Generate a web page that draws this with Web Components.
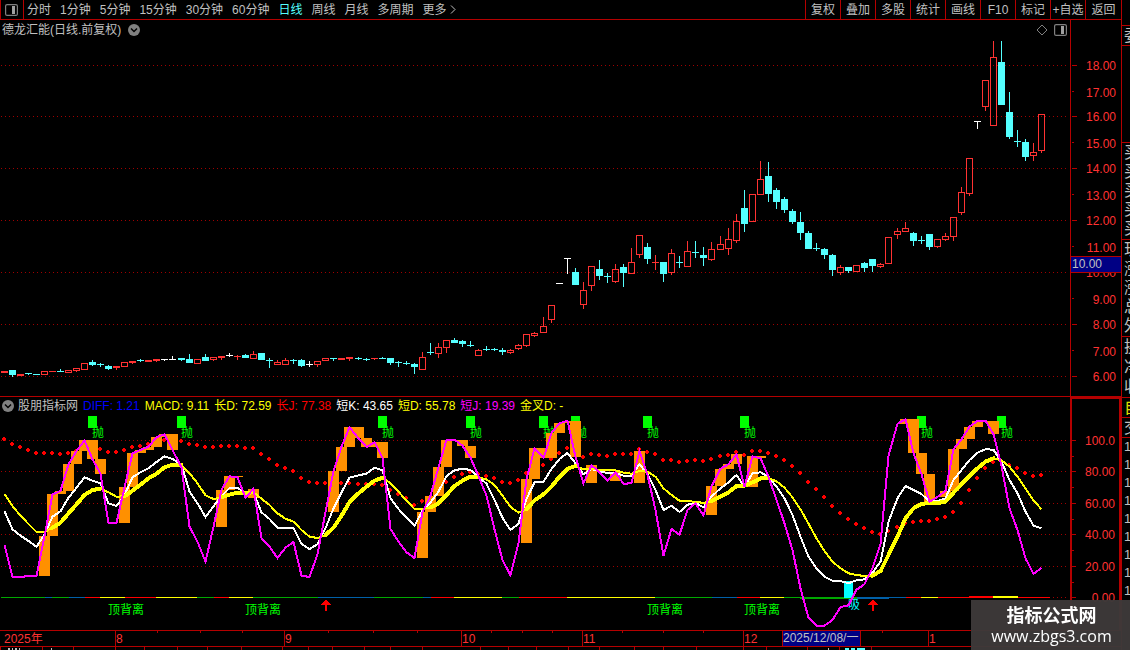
<!DOCTYPE html>
<html lang="zh-CN">
<head>
<meta charset="UTF-8">
<meta name="viewport" content="width=device-width, initial-scale=1">
<title>德龙汇能 日线</title>
<style>
  :root {
    --frame: #b40000;
    --label: #ff3232;
    --text: #c0c0c0;
    --up: #ff3232;
    --down: #54ffff;
  }
  body {
    margin: 0;
    background: #000;
    color: var(--text);
    font: 12px/16px "Liberation Sans", "Noto Sans CJK SC", sans-serif;
    overflow: hidden;
  }
</style>
</head>
<body>
<stock-app>
  <period-bar>
    <tool-button>分时</tool-button>
    <tool-button>1分钟</tool-button>
    <tool-button>5分钟</tool-button>
    <tool-button>15分钟</tool-button>
    <tool-button>30分钟</tool-button>
    <tool-button>60分钟</tool-button>
    <tool-button active>日线</tool-button>
    <tool-button>周线</tool-button>
    <tool-button>月线</tool-button>
    <tool-button>多周期</tool-button>
    <tool-button more>更多</tool-button>
    <tool-button slot="tools" boxed>复权</tool-button>
    <tool-button slot="tools" boxed>叠加</tool-button>
    <tool-button slot="tools" boxed>多股</tool-button>
    <tool-button slot="tools" boxed>统计</tool-button>
    <tool-button slot="tools" boxed>画线</tool-button>
    <tool-button slot="tools" boxed>F10</tool-button>
    <tool-button slot="tools" boxed>标记</tool-button>
    <tool-button slot="tools" boxed>+自选</tool-button>
    <tool-button slot="tools" boxed>返回</tool-button>
  </period-bar>
  <price-chart>德龙汇能(日线.前复权)</price-chart>
  <kdj-chart>
    <legend-item slot="legend" style="color:#0000ff">DIFF: 1.21</legend-item>
    <legend-item slot="legend" style="color:#ffff00">MACD: 9.11</legend-item>
    <legend-item slot="legend" style="color:#ffff00">长D: 72.59</legend-item>
    <legend-item slot="legend" style="color:#ff0000">长J: 77.38</legend-item>
    <legend-item slot="legend" style="color:#ffffff">短K: 43.65</legend-item>
    <legend-item slot="legend" style="color:#ffff00">短D: 55.78</legend-item>
    <legend-item slot="legend" style="color:#ff00ff">短J: 19.39</legend-item>
    <legend-item slot="legend" style="color:#ffff00">金叉D: -</legend-item>
    股朋指标网
  </kdj-chart>
  <time-axis></time-axis>
  <quote-rail slot="rail"></quote-rail>
</stock-app>
<site-mark>
  <span slot="name">指标公式网</span>
  www.zbgs3.com
</site-mark>

<script>
// Column of each trading day: 8px pitch with a spare pixel now and then
const dayX = i => 4 + 8 * i + Math.floor((i + 0.5) / 22.25);

const chevron = `
  <svg class="chevron" width="12" height="12" viewBox="0 0 12 12">
    <circle cx="6" cy="6" r="6" fill="#808080"/>
    <path d="M3 4.5 L6 7.5 L9 4.5" fill="none" stroke="#000" stroke-width="1.5"/>
  </svg>`;

const panelIcon = `
  <svg width="13" height="12" viewBox="0 0 13 12">
    <rect x="0.6" y="0.6" width="11.8" height="10.8" rx="1.5" fill="none" stroke="#808080" stroke-width="1.2"/>
    <rect x="7" y="2" width="3" height="8" fill="#a0a0a0"/>
  </svg>`;

class StockApp extends HTMLElement {
  connectedCallback() {
    this.attachShadow({ mode: 'open' });
    this.shadowRoot.innerHTML = `
      <style>
        :host {
          display: grid;
          grid-template-columns: minmax(0, 1fr) 9px;
          min-height: 100vh;
        }
        main {
          display: flex;
          flex-direction: column;
          min-width: 0;
        }
      </style>
      <main><slot></slot></main>
      <slot name="rail"></slot>
    `;
  }
}

class ToolButton extends HTMLElement {
  connectedCallback() {
    const more = this.hasAttribute('more')
      ? '<svg width="6" height="9" viewBox="0 0 6 9"><path d="M1 0.5 L5 4.5 L1 8.5" fill="none" stroke="currentColor"/></svg>'
      : '';
    this.attachShadow({ mode: 'open' });
    this.shadowRoot.innerHTML = `
      <style>
        :host { display: flex; }
        :host([boxed]) {
          width: 34px;
          border-left: 1px solid var(--frame);
        }
        :host([boxed]:last-of-type) { width: 35px; }
        button {
          flex: 1;
          display: flex;
          align-items: center;
          justify-content: center;
          gap: 3px;
          padding: 0;
          border: 0;
          background: none;
          color: var(--text);
          font: inherit;
          white-space: nowrap;
          cursor: pointer;
        }
        :host([active]) button { color: var(--down); }
        button:hover { color: #fff; }
      </style>
      <button type="button"><slot></slot>${more}</button>
    `;
  }
}

class PeriodBar extends HTMLElement {
  connectedCallback() {
    this.attachShadow({ mode: 'open' });
    this.shadowRoot.innerHTML = `
      <style>
        :host {
          display: flex;
          justify-content: space-between;
          height: 19px;
          border-bottom: 1px solid var(--frame);
        }
        .periods { display: flex; gap: 9px; }
        .layout {
          display: flex;
          align-items: center;
          justify-content: center;
          width: 24px;
          margin-right: -6px;
          padding: 0 2px 0 0;
          border: 1px solid var(--frame);
          border-width: 0 1px;
          box-sizing: border-box;
          background: none;
        }
        .tools { display: flex; }
      </style>
      <div class="periods">
        <button class="layout" type="button" aria-label="布局">${panelIcon}</button>
        <slot></slot>
      </div>
      <div class="tools"><slot name="tools"></slot></div>
    `;
  }
}

const paneStyle = `
  :host {
    display: grid;
    grid-template-columns: minmax(0, 1fr) 51px;
    --grid: #a00000;
  }
  .pane { min-width: 0; }
  .head {
    display: flex;
    align-items: center;
    white-space: nowrap;
  }
  svg { display: block; shape-rendering: crispEdges; }
  .chevron, .icons svg { shape-rendering: auto; flex: none; }
  .grid { stroke: var(--grid); stroke-dasharray: 1 3; }
  .tick { stroke: var(--frame); }
  .axis text { fill: var(--label); text-anchor: end; }
`;

// kind, high, body top, body bottom, low (r rising, c falling, w unchanged)
const candles = `
r371,371,373,373 c370,370,375,377 r374,374,376,376 c373,373,374,375 c374,374,375,375
r371,371,375,375 r371,371,372,372 c369,371,372,372 r370,370,373,373 r368,368,371,372
r363,363,370,370 c360,362,365,366 c363,364,365,367 c365,366,369,370 r366,366,368,370
r362,362,367,367 r361,361,363,364 c359,360,361,362 r360,360,362,362 r359,359,361,362
w359,359,360,361 w356,359,360,360 c358,358,360,361 c354,359,363,363 r359,359,364,364
c354,357,361,361 r357,357,360,361 r356,356,358,360 w353,355,356,357 r355,356,357,360
c354,355,358,358 r351,354,359,359 c353,353,360,360 c358,360,361,368 r360,362,365,365
r358,360,365,365 c359,360,361,364 c359,360,366,367 w361,364,365,367 r361,361,365,367
r358,358,361,361 c358,358,359,361 r358,358,360,360 r357,357,359,361 c357,358,359,360
c358,359,360,361 r358,358,359,360 c357,358,359,359 c358,358,363,365 c361,362,363,367
c361,363,364,365 c363,364,367,374 r352,357,370,370 c343,352,353,355 r343,347,354,358
r340,340,348,353 c338,340,343,343 c340,341,344,347 c341,345,346,347 r349,350,356,356
c346,349,350,351 c348,349,350,351 c348,350,352,355 r349,350,353,354 r344,345,349,350
r334,334,346,347 r332,333,336,337 r317,326,333,333 r305,305,320,323 w283,283,284,284
w258,258,259,274 c268,272,285,285 r282,290,305,309 r266,266,286,291 c260,269,276,280
c273,276,277,283 r264,269,282,283 c264,267,273,287 r248,262,274,274 r235,235,255,258
c243,247,259,264 r255,262,263,270 c262,262,274,282 r249,253,273,275 c256,262,263,268
r241,251,267,267 c241,252,253,258 c247,255,258,266 r242,249,260,261 r236,244,250,250
r228,239,249,255 r214,221,241,243 c190,208,224,232 r194,194,222,222 r161,179,195,195
c162,176,194,202 c188,190,202,209 c197,199,210,213 c209,211,222,224 c212,222,233,240
c231,233,249,249 c243,248,249,251 c248,249,255,259 c254,255,270,276 r265,267,273,275
c267,267,271,273 r265,265,272,272 c262,263,268,272 c259,259,266,272 r263,264,267,268
r237,237,264,264 r228,231,235,239 r222,228,232,232 c232,233,241,246 c236,240,241,244
c234,234,247,250 r239,239,247,248 r233,236,240,241 r217,217,237,241 r187,192,213,215
r158,158,194,196 w121,121,122,129 r80,80,107,111 r41,57,126,126 c41,62,105,105
c92,112,137,139 c130,141,142,147 c139,142,157,161 r143,152,156,161 r114,114,151,153
`.trim().split(/\s+/).map(s => [s[0], ...s.slice(1).split(',').map(Number)]);

const priceTicks = [
  ['18.00', 65], ['17.00', 91], ['16.00', 116], ['15.00', 142], ['14.00', 168],
  ['13.00', 194], ['12.00', 220], ['11.00', 246], ['10.00', 272], ['9.00', 298],
  ['8.00', 324], ['7.00', 350], ['6.00', 376]
];

class PriceChart extends HTMLElement {
  drawCandle([kind, high, top, bottom, low], i) {
    const x = dayX(i);
    const color = { r: 'var(--up)', c: 'var(--down)', w: '#fff' }[kind];
    const wick = (a, b) => b > a ? `<rect x="${x}" y="${a}" width="1" height="${b - a}" fill="${color}"/>` : '';
    let body = `<rect x="${x - 3}" y="${top}" width="7" height="${bottom - top}" fill="${color}"/>`;
    if (kind === 'r' && bottom - top > 2) {
      body = `<rect x="${x - 2.5}" y="${top + 0.5}" width="6" height="${bottom - top - 1}" fill="none" stroke="${color}"/>`;
    }
    return wick(high, top) + body + wick(bottom, low);
  }

  connectedCallback() {
    const grid = priceTicks.filter((t, i) => i % 2 === 0)
      .map(([, y]) => `<line class="grid" x1="1" x2="99.7%" y1="${y + 0.5}" y2="${y + 0.5}"/>`).join('');
    const axis = priceTicks.map(([label, y], i) => `
      <line class="tick" x1="1" x2="${i % 2 ? 3 : 6}" y1="${y + 0.5}" y2="${y + 0.5}"/>
      <text x="45" y="${y + (i % 2 ? 6 : 5)}">${label}</text>`).join('');
    this.attachShadow({ mode: 'open' });
    this.shadowRoot.innerHTML = `
      <style>
        ${paneStyle}
        :host { border-bottom: 1px solid var(--frame); }
        .head { height: 20px; gap: 7px; padding: 0 3px 0 2px; }
        .icons { display: flex; align-items: center; gap: 6px; margin-left: auto; }
        .axis { border-left: 1px solid var(--frame); }
        .cursor rect { fill: #000084; stroke: var(--frame); }
        .axis .cursor text { fill: var(--text); text-anchor: start; }
      </style>
      <div class="pane">
        <div class="head">
          <span><slot></slot></span>${chevron}
          <div class="icons">
            <svg width="12" height="12" viewBox="0 0 12 12">
              <path d="M6 1 L11 6 L6 11 L1 6 Z" fill="none" stroke="#808080"/>
            </svg>
            ${panelIcon}
          </div>
        </div>
        <svg width="100%" height="356">
          <g transform="translate(0 -40)">
            ${grid}
            ${candles.map(this.drawCandle).join('')}
          </g>
        </svg>
      </div>
      <div class="axis">
        <svg width="50" height="376">
          <g transform="translate(0 -20)">
            ${axis}
            <g class="cursor">
              <rect x="-0.5" y="256.5" width="51" height="16"/>
              <text x="1" y="268">10.00</text>
            </g>
          </g>
        </svg>
      </div>
    `;
  }
}

class LegendItem extends HTMLElement {
  connectedCallback() {
    this.attachShadow({ mode: 'open' });
    this.shadowRoot.innerHTML = `
      <style>:host { display: block; }</style>
      <slot></slot>
    `;
  }
}

// Indicator levels, one per day, counted down in thirds of a pixel
const J = [
  451, 546, 546, 543, 543, 424, 298, 288, 208, 168, 136, 193, 236, 384, 384, 277, 175, 165, 155, 127,
  118, 165, 217, 395, 440, 500, 395, 284, 244, 247, 308, 281, 430, 455, 489, 458, 441, 542, 546, 478,
  351, 229, 155, 97, 130, 156, 142, 188, 402, 440, 472, 489, 352, 302, 217, 135, 134, 152, 188, 243,
  302, 403, 495, 541, 445, 253, 160, 189, 114, 85, 77, 186, 265, 211, 232, 257, 232, 267, 264, 168,
  240, 345, 482, 402, 419, 345, 325, 361, 274, 221, 208, 178, 276, 184, 190, 245, 315, 385, 465, 580,
  668, 692, 692, 675, 636, 631, 584, 568, 520, 448, 182, 86, 73, 174, 238, 320, 306, 287, 163, 133,
  95, 78, 77, 118, 213, 340, 405, 490, 537, 518
];
const K = [
  349, 403, 422, 438, 456, 418, 365, 349, 308, 278, 247, 257, 265, 325, 333, 300, 247, 232, 220, 201,
  184, 192, 209, 290, 325, 366, 334, 303, 279, 278, 295, 292, 352, 372, 398, 398, 399, 447, 462, 448,
  400, 340, 292, 248, 241, 236, 218, 226, 310, 342, 368, 392, 347, 322, 290, 243, 226, 221, 225, 245,
  266, 315, 368, 405, 386, 312, 262, 260, 222, 192, 174, 205, 238, 222, 228, 235, 234, 242, 243, 208,
  238, 285, 345, 332, 351, 329, 324, 337, 305, 280, 262, 240, 275, 235, 232, 245, 275, 310, 360, 425,
  485, 520, 545, 557, 558, 565, 556, 553, 533, 500, 380, 310, 273, 285, 297, 320, 318, 310, 255, 225,
  195, 173, 163, 164, 200, 255, 295, 350, 392, 400
];
const D = [
  297, 333, 362, 387, 411, 411, 398, 383, 355, 328, 300, 285, 281, 292, 305, 304, 287, 269, 250, 236,
  217, 209, 210, 235, 265, 301, 312, 307, 299, 293, 294, 292, 311, 330, 355, 371, 380, 405, 425, 429,
  420, 398, 362, 322, 295, 275, 257, 248, 265, 290, 317, 342, 342, 337, 325, 300, 273, 257, 245, 247,
  253, 270, 302, 336, 353, 343, 316, 298, 275, 245, 221, 213, 223, 222, 224, 226, 226, 233, 236, 228,
  230, 245, 280, 300, 317, 319, 320, 324, 318, 305, 292, 273, 272, 262, 250, 249, 259, 278, 307, 343,
  386, 430, 468, 500, 520, 535, 540, 543, 542, 528, 480, 425, 370, 340, 326, 325, 324, 320, 293, 268,
  243, 220, 200, 190, 196, 215, 245, 280, 316, 343
];
const longJ = [
  132, 147, 156, 165, 174, 174, 174, 177, 174, 168, 160, 155, 162, 171, 171, 165, 156, 153, 147, 141,
  135, 135, 139, 147, 150, 156, 156, 153, 153, 153, 159, 159, 177, 192, 210, 219, 228, 249, 261, 264,
  264, 264, 264, 264, 267, 267, 267, 270, 285, 297, 309, 330, 318, 305, 285, 261, 246, 237, 232, 237,
  243, 249, 261, 264, 255, 234, 220, 210, 192, 174, 159, 175, 186, 177, 180, 183, 177, 177, 177, 162,
  171, 177, 195, 195, 201, 198, 195, 198, 192, 183, 180, 171, 180, 168, 168, 174, 183, 195, 213, 234,
  261, 282, 306, 333, 354, 372, 387, 399, 411, 417, 408, 396, 385, 381, 378, 378, 372, 366, 351, 324,
  285, 249, 219, 201, 198, 210, 219, 234, 243, 240
];
const barDays = [
  5, 6, 7, 8, 9, 10, 11, 12, 15, 16, 17, 18, 19, 20, 21, 27, 28, 29, 31,
  41, 42, 43, 44, 45, 46, 47, 52, 53, 54, 55, 56, 57, 58, 65, 66, 67, 68, 69, 70, 71,
  73, 76, 79, 88, 89, 90, 91, 93, 94, 112, 113, 114, 115, 117, 118, 119, 120, 121, 122, 123
];
const sellDays = [11, 22, 47, 58, 67, 71, 80, 92, 114, 124];
const divergenceDays = [13, 30, 80, 92];
const arrowDays = [40, 108];

// Trend strip: start x, colour key (capital letter for a heavy run)
const trend = [
  [1, 'g'], [45, 'b'], [52, 'g'], [69, 'b'], [85, 'r'], [100, 'y'], [125, 'r'], [156, 'y'], [197, 'g'],
  [214, 'r'], [229, 'y'], [253, 'g'], [318, 'b'], [374, 'g'], [423, 'b'], [431, 'r'], [454, 'y'],
  [502, 'g'], [519, 'r'], [567, 'y'], [655, 'g'], [712, 'b'], [737, 'r'], [760, 'y'], [784, 'g'],
  [800, 'G'], [857, 'B'], [889, 'b'], [906, 'r'], [921, 'y'], [938, 'r'], [969, 'R'], [993, 'Y'],
  [1018, 'r'], [1050, '']
];
const trendColors = { g: '#00a800', b: '#0060a8', r: '#ff0000', y: '#ffff00' };

const levelTicks = [['100.0', 440], ['80.00', 471], ['60.00', 503], ['40.00', 534], ['20.00', 566], ['0.00', 597]];

class KdjChart extends HTMLElement {
  connectedCallback() {
    const y = v => 395 + v / 3;
    const point = (v, i) => `${dayX(i) + 0.5},${y(v).toFixed(1)}`;
    const line = (series, color) =>
      `<polyline points="${series.map(point).join(' ')}" fill="none" stroke="${color}" stroke-width="2"/>`;

    const grid = levelTicks
      .map(([, t]) => `<line class="grid" x1="1" x2="99.7%" y1="${t + 0.5}" y2="${t + 0.5}"/>`).join('');
    // Each dot is a 4px square with its corners cut
    const dots = longJ.map((v, i) => {
      const top = Math.round(y(v)) - 2;
      return `<path d="M${dayX(i) - 1} ${top} h2 v1 h1 v2 h-1 v1 h-2 v-1 h-1 v-2 h1 Z"/>`;
    }).join('');
    const bars = barDays.map(i => {
      const a = Math.round(y(Math.min(J[i - 1], J[i])));
      const b = Math.round(y(Math.max(J[i - 1], J[i])));
      return `<rect x="${dayX(i) - 5}" y="${a}" width="11" height="${Math.max(b - a, 1)}"/>`;
    }).join('');
    // D is drawn heavy while K stays above it
    const heavy = D.slice(0, -1).map((v, i) => K[i] - v < 4 && K[i + 1] - D[i + 1] < 4
      ? `<polyline points="${point(v, i)} ${point(D[i + 1], i + 1)}"/>` : '').join('');
    const sells = sellDays.map(i => `
      <rect x="${dayX(i) - 4}" y="416" width="9" height="12"/>
      <text x="${dayX(i)}" y="437">抛</text>`).join('');
    const divergences = divergenceDays.map(i => `<text x="${dayX(i)}" y="614">顶背离</text>`).join('');
    const arrows = arrowDays.map(i => {
      const x = dayX(i);
      return `<path d="M${x + 1} 599 L${x + 6} 605 H${x + 2} V611 H${x} V605 H${x - 4} Z"/>`;
    }).join('');
    const strip = trend.slice(0, -1).map(([x, c], i) => {
      const key = c.toLowerCase();
      const tall = c !== key;
      const top = tall && 'ry'.includes(key) ? 596 : 597;
      return `<rect x="${x}" y="${top}" width="${trend[i + 1][0] - x}" height="${tall ? 2 : 1}" fill="${trendColors[key]}"/>`;
    }).join('');
    const axis = levelTicks.map(([label, t], i) => `
      <line class="tick" x1="0" x2="4" y1="${t + 0.5}" y2="${t + 0.5}"/>
      ${i < 5 ? `<line class="tick" x1="0" x2="2" y1="${t + 16.5}" y2="${t + 16.5}"/>` : ''}
      <text x="43" y="${t + 5}">${label}</text>`).join('');

    this.attachShadow({ mode: 'open' });
    this.shadowRoot.innerHTML = `
      <style>
        ${paneStyle}
        .head { height: 17px; gap: 5px; padding-left: 2px; }
        .name { display: flex; align-items: center; gap: 4px; }
        .axis {
          border: 2px solid var(--frame);
          border-bottom: 0;
          box-sizing: border-box;
          overflow: hidden;
        }
      </style>
      <div class="pane">
        <div class="head">
          <div class="name">${chevron}<span><slot></slot></span></div>
          <slot name="legend"></slot>
        </div>
        <svg width="100%" height="216">
          <g transform="translate(0 -414)">
            ${grid}
            <g fill="#00ff00">${sells}${divergences}</g>
            <g fill="#ff0000">${dots}${arrows}</g>
            ${strip}
            <g fill="#00ffff">
              <rect x="844" y="581" width="9" height="17"/>
              <text x="848" y="609">吸</text>
            </g>
            <g fill="#ff9000">${bars}</g>
            ${line(K, '#fff')}
            ${line(D, '#ff0')}
            <g fill="none" stroke="#ff0" stroke-width="4" stroke-linecap="round">${heavy}</g>
            ${line(J, '#f0f')}
          </g>
        </svg>
      </div>
      <div class="axis">
        <svg width="47" height="231"><g transform="translate(0 -399)">${axis}</g></svg>
      </div>
    `;
  }
}

const months = [[115, '8'], [284, '9'], [461, '10'], [582, '11'], [743, '12'], [928, '1']];
const weekTicks = [157, 200, 242, 328, 373, 417, 491, 522, 552, 622, 663, 703, 882];
const tabTicks = [
  0, 42, 73, 115, 144, 177, 207, 241, 282, 308, 332, 364, 390, 422, 480, 508, 536,
  568, 599, 634, 663, 696, 743, 766, 807, 839, 871
];

class TimeAxis extends HTMLElement {
  connectedCallback() {
    this.attachShadow({ mode: 'open' });
    this.shadowRoot.innerHTML = `
      <style>
        :host { display: block; }
        svg { display: block; shape-rendering: crispEdges; }
        rect { fill: var(--frame); }
        text { fill: var(--label); }
        .cursor rect { fill: #000084; stroke: var(--frame); }
        .cursor text { fill: var(--text); }
      </style>
      <svg width="100%" height="20">
        <rect width="100%" height="1"/>
        <rect y="16" width="100%" height="1"/>
        <text x="4" y="13">2025年</text>
        ${months.map(([x, m]) => `<rect x="${x}" width="1" height="16"/><text x="${x + 1}" y="13">${m}</text>`).join('')}
        ${weekTicks.map(x => `<rect x="${x}" y="1" width="1" height="2"/>`).join('')}
        ${tabTicks.map(x => `<rect x="${x}" y="17" width="1" height="3"/>`).join('')}
        <path d="M8 19 h2 M12 19 h1 M15 19 h2 M19 19 h1 M51 19 h1 M828 19 h1" stroke="#c0c0c0" stroke-width="2"/>
        <path d="M845 19 h4 M851 19 h4 M857 19 h8" stroke="#54ffff" stroke-width="2"/>
        <g class="cursor">
          <rect x="782.5" y="0.5" width="78" height="16"/>
          <text x="783" y="12">2025/12/08/一</text>
        </g>
      </svg>
    `;
  }
}

class QuoteRail extends HTMLElement {
  connectedCallback() {
    const rows = chars => [...chars].map(c => `<span>${c}</span>`).join('');
    this.attachShadow({ mode: 'open' });
    this.shadowRoot.innerHTML = `
      <style>
        :host {
          display: flex;
          flex-direction: column;
          border-left: 1px solid var(--frame);
          overflow: hidden;
          font-size: 16px;
        }
        div {
          display: grid;
          grid-auto-rows: 1fr;
          align-items: center;
          padding-left: 2px;
          border-bottom: 1px solid var(--frame);
          box-sizing: border-box;
        }
        .top { height: 26px; }
        .row { height: 20px; }
        .group { height: 97px; }
        .info { height: 61px; }
        .own { color: #e0e000; }
        .ticks {
          border: 0;
          grid-auto-rows: 18px;
          font-size: 13px;
        }
      </style>
      <div class="top"></div>
      <div class="row">委</div>
      <div class="group"></div>
      <div class="group">${rows('买买买买买')}</div>
      <div class="group">${rows('现涨涨总外')}</div>
      <div class="info">${rows('换净收')}</div>
      <div class="row own">自</div>
      <div class="row">交</div>
      <div class="ticks">${rows('111111111')}</div>
    `;
  }
}

class SiteMark extends HTMLElement {
  connectedCallback() {
    this.attachShadow({ mode: 'open' });
    this.shadowRoot.innerHTML = `
      <style>
        :host {
          position: fixed;
          right: 0;
          bottom: 0;
          display: grid;
          align-content: center;
          justify-items: center;
          width: 157px;
          height: 50px;
          padding-left: 2px;
          background: rgba(61, 57, 57, 0.97);
          color: #fff;
          font: 16px/20px "Open Sans", "Noto Sans CJK SC", sans-serif;
        }
        strong { font-size: 18px; line-height: 22px; }
      </style>
      <strong><slot name="name"></slot></strong>
      <span><slot></slot></span>
    `;
  }
}

customElements.define('tool-button', ToolButton);
customElements.define('period-bar', PeriodBar);
customElements.define('price-chart', PriceChart);
customElements.define('legend-item', LegendItem);
customElements.define('kdj-chart', KdjChart);
customElements.define('time-axis', TimeAxis);
customElements.define('quote-rail', QuoteRail);
customElements.define('site-mark', SiteMark);
customElements.define('stock-app', StockApp);
</script>
</body>
</html>
